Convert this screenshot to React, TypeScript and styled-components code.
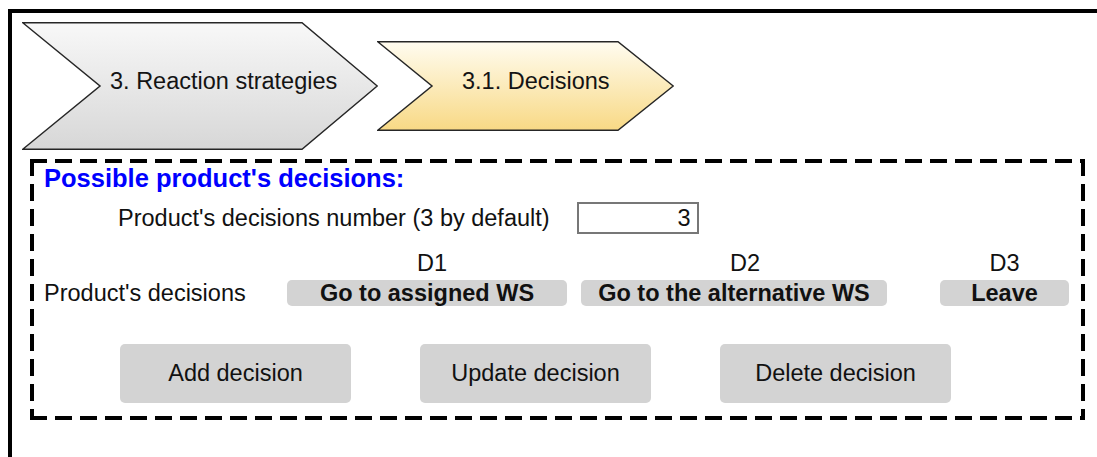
import React, { FC } from 'react';
import styled, { createGlobalStyle } from 'styled-components';

const GlobalStyle = createGlobalStyle`
  html, body {
    margin: 0;
    padding: 0;
    background: #ffffff;
    overflow: hidden;
  }
  body {
    font-family: 'Liberation Sans', Arial, sans-serif;
    color: #111111;
  }
`;

interface IChevronProps {
  label: string;
  width: number;
  height: number;
  tail: number;
  tip: number;
  top: string;
  bottom: string;
  textLeft: number;
  lift: number;
}

const Chevron: FC<IChevronProps> = ({ label, width, height, tail, tip, top, bottom, textLeft, lift }) => {
  const id = `grad-${width}`;
  const s = 0.75;
  const points = [
    [s, s],
    [width - tip, s],
    [width - s, height / 2],
    [width - tip, height - s],
    [s, height - s],
    [tail, height / 2],
  ]
    .map((p) => p.join(','))
    .join(' ');
  return (
    <ChevronBox $w={width} $h={height}>
      <ChevronShape width={width} height={height} viewBox={`0 0 ${width} ${height}`}>
        <defs>
          <linearGradient id={id} x1="0" y1="0" x2="0" y2="1">
            <stop offset="0" stopColor={top} />
            <stop offset="1" stopColor={bottom} />
          </linearGradient>
        </defs>
        <polygon points={points} fill={`url(#${id})`} stroke="#262626" strokeWidth="1.5" strokeLinejoin="miter" />
      </ChevronShape>
      <ChevronLabel $left={textLeft} $lift={lift}>
        {label}
      </ChevronLabel>
    </ChevronBox>
  );
};

const decisions = [
  { name: 'D1', text: 'Go to assigned WS', width: 280, offset: 0, shift: 10 },
  { name: 'D2', text: 'Go to the alternative WS', width: 306, offset: 14, shift: 22 },
  { name: 'D3', text: 'Leave', width: 129, offset: 53, shift: 0 },
];

const actions = ['Add decision', 'Update decision', 'Delete decision'];

export default function App() {
  return (
    <>
      <GlobalStyle />
      <Frame>
        <ChevronRow>
          <Chevron
            label="3. Reaction strategies"
            width={356}
            height={128}
            tail={78}
            tip={76}
            top="#f8f8f8"
            bottom="#d7d7d7"
            textLeft={88}
            lift={10}
          />
          <Chevron
            label="3.1. Decisions"
            width={297}
            height={90}
            tail={55}
            tip={56}
            top="#fffcf0"
            bottom="#f8d985"
            textLeft={85}
            lift={10}
          />
        </ChevronRow>
        <Panel>
          <Heading>Possible product's decisions:</Heading>
          <NumberRow>
            <FieldLabel>Product's decisions number (3 by default)</FieldLabel>
            <NumberInput readOnly value="3" />
          </NumberRow>
          <DecisionRow>
            <RowLabel>Product's decisions</RowLabel>
            {decisions.map((d) => (
              <DecisionCol key={d.name} $width={d.width} $offset={d.offset}>
                <DecisionName $shift={d.shift}>{d.name}</DecisionName>
                <DecisionPill>{d.text}</DecisionPill>
              </DecisionCol>
            ))}
          </DecisionRow>
          <ActionRow>
            {actions.map((a) => (
              <ActionButton key={a}>{a}</ActionButton>
            ))}
          </ActionRow>
        </Panel>
      </Frame>
    </>
  );
}

const Frame = styled.div`
  margin: 9px 0 0 8px;
  width: calc(100vw - 8px);
  height: calc(100vh - 9px);
  border-top: 4px solid #000;
  border-left: 4px solid #000;
  padding: 9px 0 0 10px;
  box-sizing: border-box;
`;

const ChevronRow = styled.div`
  display: flex;
  align-items: center;
`;

const ChevronBox = styled.div<{ $w: number; $h: number }>`
  position: relative;
  width: ${({ $w }) => $w}px;
  height: ${({ $h }) => $h}px;
  display: flex;
  align-items: center;
  & + & {
    margin-left: -1px;
  }
`;

const ChevronShape = styled.svg`
  position: absolute;
  left: 0;
  top: 0;
`;

const ChevronLabel = styled.div<{ $left: number; $lift: number }>`
  position: relative;
  padding-left: ${({ $left }) => $left}px;
  padding-bottom: ${({ $lift }) => $lift}px;
  font-size: 23.5px;
  color: #141414;
  white-space: nowrap;
`;

// dashed frame drawn with gradients so the dash/gap lengths match (17px / 8px)
const dashH = 'repeating-linear-gradient(90deg, #000 0 17px, transparent 17px 25px)';
const dashV = 'repeating-linear-gradient(180deg, #000 0 17px, transparent 17px 25px)';

const Panel = styled.div`
  margin: 9px 0 0 8px;
  width: 1055px;
  height: 261px;
  box-sizing: border-box;
  padding: 5px 4px 4px 4px;
  background:
    ${dashH} left top / 100% 4px no-repeat,
    ${dashH} left bottom / 100% 4px no-repeat,
    ${dashV} left top / 4px 100% no-repeat,
    ${dashV} right top / 4px 100% no-repeat;
`;

const Heading = styled.div`
  margin-left: 10px;
  font-size: 25.5px;
  line-height: 29px;
  font-weight: bold;
  color: #0000ff;
`;

const NumberRow = styled.div`
  display: flex;
  align-items: center;
  margin: 9px 0 0 84px;
  gap: 27px;
`;

const FieldLabel = styled.div`
  font-size: 23.5px;
  line-height: 32px;
`;

const NumberInput = styled.input`
  width: 122px;
  height: 32px;
  box-sizing: border-box;
  border: 2px solid #777;
  padding: 0 6px 0 0;
  margin: 0;
  text-align: right;
  font-family: 'Liberation Sans', Arial, sans-serif;
  font-size: 23.5px;
  color: #111;
  outline: none;
`;

const DecisionRow = styled.div`
  display: flex;
  align-items: flex-end;
  margin: 16px 0 0 10px;
`;

const RowLabel = styled.div`
  width: 243px;
  font-size: 23.5px;
  line-height: 26px;
`;

const DecisionCol = styled.div<{ $width: number; $offset: number }>`
  display: flex;
  flex-direction: column;
  align-items: center;
  width: ${({ $width }) => $width}px;
  margin-left: ${({ $offset }) => $offset}px;
`;

const DecisionName = styled.div<{ $shift: number }>`
  font-size: 23.5px;
  line-height: 27px;
  margin-bottom: 3px;
  padding-left: ${({ $shift }) => $shift}px;
`;

const DecisionPill = styled.div`
  width: 100%;
  height: 26px;
  line-height: 26px;
  background: #d3d3d3;
  border-radius: 5px;
  text-align: center;
  font-size: 23.5px;
  font-weight: bold;
  white-space: nowrap;
`;

const ActionRow = styled.div`
  display: flex;
  gap: 69px;
  margin: 38px 0 0 86px;
`;

const ActionButton = styled.div`
  width: 231px;
  height: 59px;
  display: flex;
  align-items: center;
  justify-content: center;
  background: #d3d3d3;
  border-radius: 5px;
  font-size: 23.5px;
`;
